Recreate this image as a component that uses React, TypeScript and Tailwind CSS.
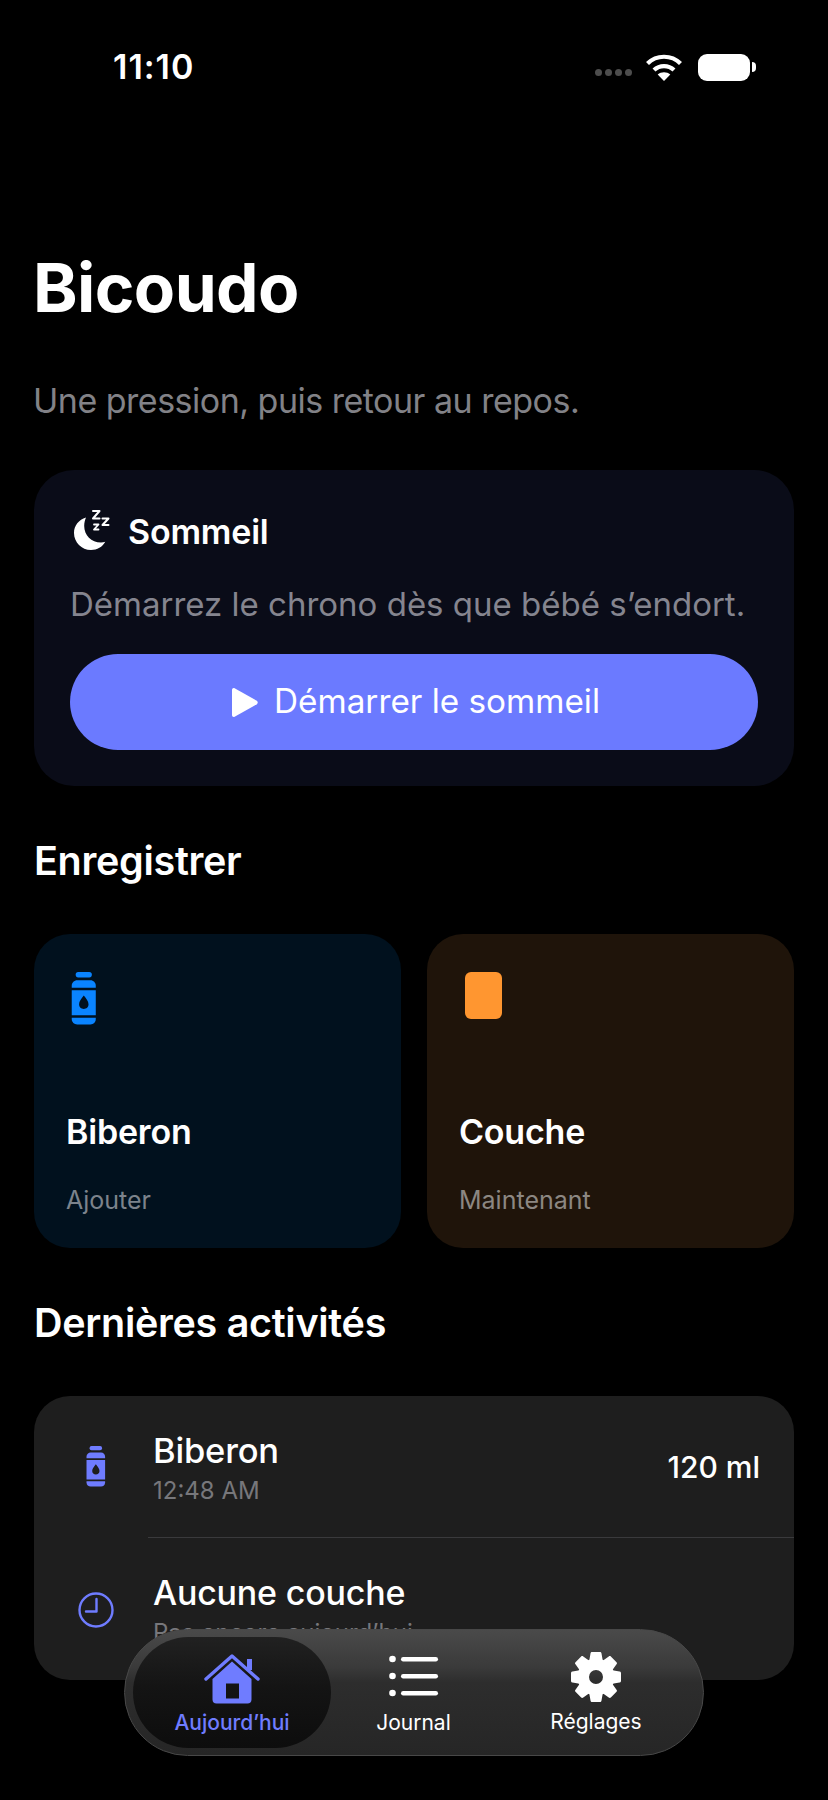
const font = { fontFamily: 'Inter, "Noto Sans", sans-serif' }

function BottleIcon({ className }: { className: string }) {
  return (
    <svg viewBox="0 0 26 54" className={className} fill="currentColor">
      <rect x="4.500" y="0" width="16.500" height="5.500" rx="2.600" />
      <path d="M6 8.500h13.600c3 0 5.400 2.400 5.400 5.600V16H0.500v-1.900C0.500 10.900 3 8.500 6 8.500Z" />
      <path
        fillRule="evenodd"
        d="M0.500 18.500H25V44H0.500V18.500ZM12.800 24c-2.500 3.300-4.800 5.900-4.800 8.900 0 2.800 2.100 4.800 4.800 4.800s4.800-2 4.800-4.800c0-3-2.300-5.600-4.800-8.900Z"
      />
      <path d="M0.500 46.500H25V48c0 3.200-2.400 5.500-5.400 5.500H6c-3 0-5.500-2.300-5.500-5.500V46.500Z" />
    </svg>
  )
}

function SleepIcon() {
  return (
    <svg viewBox="0 0 38 42" className="w-[38px] h-[42px] text-white" fill="none">
      <path
        d="M13 8.500C5.800 10.600 1 16.800 1 24c0 9.400 7.600 17 17 17 6.200 0 11.400-3 14.300-8.200-1.300.4-2.800.6-4.300.6-9.700 0-16.800-7.500-16.800-16.500 0-3.400.9-6.400 1.800-8.400Z"
        fill="currentColor"
      />
      <path d="M20 2h6.500L20 9.500h6.500" stroke="currentColor" strokeWidth="2" strokeLinejoin="round" strokeLinecap="round" />
      <path d="M29.500 9.500h6L29.500 16h6" stroke="currentColor" strokeWidth="2" strokeLinejoin="round" strokeLinecap="round" />
      <path d="M21 15.500h4.500L21 20.500h4.500" stroke="currentColor" strokeWidth="1.800" strokeLinejoin="round" strokeLinecap="round" />
    </svg>
  )
}

function HouseIcon() {
  return (
    <svg viewBox="0 0 56 50" className="w-[56px] h-[50px] text-[#6f7cff]" fill="none">
      <path d="M43 5h5v11h-5z" fill="currentColor" />
      <path d="M2 25 28 2l26 23" stroke="currentColor" strokeWidth="3.400" strokeLinecap="round" strokeLinejoin="round" />
      <path
        fillRule="evenodd"
        d="M28 7.500 47.500 25v20.500c0 2.500-1.500 4-4 4h-31c-2.500 0-4-1.500-4-4V25L28 7.500ZM22 29.500V44.500h13V29.500H22Z"
        fill="currentColor"
      />
    </svg>
  )
}

function ListIcon() {
  return (
    <svg viewBox="0 0 50 42" className="w-[50px] h-[42px] text-white" fill="currentColor">
      <circle cx="3.500" cy="4" r="3.300" />
      <circle cx="3.500" cy="21" r="3.300" />
      <circle cx="3.500" cy="38" r="3.300" />
      <rect x="12" y="2" width="37" height="4.400" rx="2.200" />
      <rect x="12" y="19" width="37" height="4.400" rx="2.200" />
      <rect x="12" y="36" width="37" height="4.400" rx="2.200" />
    </svg>
  )
}

function GearIcon() {
  const teeth = [0, 45, 90, 135, 180, 225, 270, 315]
  return (
    <svg viewBox="0 0 50 50" className="w-[50px] h-[50px] text-white" fill="currentColor">
      {teeth.map((a) => (
        <path key={a} d="M19.500 1.500c0-.8.600-1.500 1.500-1.500h8c.9 0 1.500.7 1.500 1.500L32 10H18Z" transform={`rotate(${a} 25 25)`} />
      ))}
      <path
        fillRule="evenodd"
        d="M25 6.500a18.500 18.500 0 1 0 0 37 18.500 18.500 0 0 0 0-37ZM25 18a7 7 0 1 1 0 14 7 7 0 0 1 0-14Z"
      />
    </svg>
  )
}

function WifiIcon() {
  return (
    <svg viewBox="0 0 38 28" className="w-[38px] h-[28px] text-white" fill="none" stroke="currentColor" strokeLinecap="butt">
      <path d="M2.500 10.500C11.500 1.500 26.500 1.500 35.500 10.500" strokeWidth="4.200" />
      <path d="M9 17c5.500-5.300 14.500-5.300 20 0" strokeWidth="4.200" />
      <path d="M19 28l-6.300-6.400c3.500-3 9.100-3 12.600 0Z" fill="currentColor" stroke="none" />
    </svg>
  )
}

function ClockIcon() {
  return (
    <svg viewBox="0 0 36 36" className="w-[36px] h-[36px] text-[#6f7cff]" fill="none" stroke="currentColor" strokeWidth="2.400">
      <circle cx="18" cy="18" r="16.500" />
      <path d="M18.500 7v12.500H8" strokeLinecap="round" strokeLinejoin="round" />
    </svg>
  )
}

export default function App() {
  return (
    <div style={font} className="relative w-[828px] h-[1800px] overflow-hidden bg-black text-white antialiased">
      {/* Status bar */}
      <div className="flex items-center justify-between h-[40px] mt-[47px] pl-[113px] pr-[72px]">
        <span className="text-[34px] leading-[40px] font-semibold tracking-[1px]">11:10</span>
        <div className="flex items-center">
          <div className="flex gap-[3px] mr-[13px] mt-[10px]">
            <span className="w-[7px] h-[7px] rounded-full bg-[#4d4d4d]" />
            <span className="w-[7px] h-[7px] rounded-full bg-[#4d4d4d]" />
            <span className="w-[7px] h-[7px] rounded-full bg-[#4d4d4d]" />
            <span className="w-[7px] h-[7px] rounded-full bg-[#4d4d4d]" />
          </div>
          <WifiIcon />
          <div className="w-[52px] h-[27px] ml-[15px] rounded-[9px] bg-white" />
          <div className="w-[4px] h-[10px] ml-[2px] rounded-r-full bg-white" />
        </div>
      </div>

      <div className="px-[34px]">
        {/* Header */}
        <h1 className="mt-[165px] -ml-[1px] text-[67.500px] leading-[72px] font-bold tracking-[-0.6px]">Bicoudo</h1>
        <p className="mt-[56px] -ml-[1px] text-[34px] leading-[42px] tracking-[-0.5px] text-[#828287]">Une pression, puis retour au repos.</p>

        {/* Sleep card */}
        <section className="mt-[48px] h-[316px] rounded-[40px] bg-[#0a0c18] pt-[38px] px-[36px]">
          <div className="flex items-center h-[44px] gap-[17px] pl-[3px]">
            <SleepIcon />
            <h2 className="mt-[3px] text-[34px] leading-[44px] font-semibold tracking-[-0.2px]">Sommeil</h2>
          </div>
          <p className="mt-[31px] text-[33px] leading-[42px] text-[#85858f] whitespace-nowrap">Démarrez le chrono dès que bébé s’endort.</p>
          <button className="mt-[29px] flex items-center justify-center gap-[16px] pl-[4px] w-full h-[96px] rounded-[48px] bg-[#6b7aff] text-[33.300px] font-normal">
            <svg viewBox="0 0 26 29" className="w-[26px] h-[29px]" fill="currentColor">
              <path d="M0 2C0 .5 1.300-.4 2.600.3l22.200 12.400c1.200.7 1.200 2.900 0 3.600L2.600 28.700C1.300 29.400 0 28.500 0 27Z" />
            </svg>
            Démarrer le sommeil
          </button>
        </section>

        {/* Quick log */}
        <h2 className="mt-[52px] text-[39.500px] leading-[46px] font-semibold tracking-[-0.3px]">Enregistrer</h2>
        <div className="mt-[50px] grid grid-cols-2 gap-[26px]">
          <div className="h-[314px] rounded-[36px] bg-[#01111e] pt-[38px] pl-[33px]">
            <BottleIcon className="ml-[4px] w-[26px] h-[53px] text-[#0a84ff]" />
            <div className="mt-[85px] -ml-[1px] text-[34px] leading-[44px] font-semibold tracking-[-0.2px]">Biberon</div>
            <div className="mt-[30px] -ml-[1px] text-[25px] leading-[32px] text-[#7c838c]">Ajouter</div>
          </div>
          <div className="h-[314px] rounded-[36px] bg-[#1f140a] pt-[38px] pl-[33px]">
            <div className="ml-[5px] w-[37px] h-[47px] rounded-[6px] bg-[#ff9630]" />
            <div className="mt-[91px] -ml-[1px] text-[34px] leading-[44px] font-semibold tracking-[-0.2px]">Couche</div>
            <div className="mt-[30px] -ml-[1px] text-[25px] leading-[32px] text-[#8c8782]">Maintenant</div>
          </div>
        </div>

        {/* Recent activity */}
        <h2 className="mt-[52px] text-[39.500px] leading-[46px] font-semibold tracking-[-0.3px]">Dernières activités</h2>
        <div className="mt-[50px] h-[284px] rounded-[36px] bg-[#1e1e1e] overflow-hidden">
          <div className="flex h-[141px] items-center pr-[34px]">
            <div className="w-[124px] flex justify-center shrink-0">
              <BottleIcon className="w-[20px] h-[41px] text-[#6f7cff]" />
            </div>
            <div className="flex-1 mt-[3px] -ml-[5px]">
              <div className="text-[34.500px] leading-[40px] font-medium tracking-[-0.2px]">Biberon</div>
              <div className="mt-[5px] text-[24px] leading-[30px] text-[#77777b]">12:48 AM</div>
            </div>
            <span className="mt-[2px] text-[30px] font-medium">120 ml</span>
          </div>
          <div className="ml-[114px] h-[1px] bg-[#3a3a3c]" />
          <div className="flex items-start pt-[35px]">
            <div className="w-[124px] flex justify-center shrink-0 pt-[19px]">
              <ClockIcon />
            </div>
            <div className="-ml-[5px]">
              <div className="text-[34px] leading-[40px] font-medium tracking-[-0.2px] whitespace-nowrap">Aucune couche</div>
              <div className="mt-[5px] text-[24px] leading-[30px] text-[#77777b]">Pas encore aujourd’hui</div>
            </div>
          </div>
        </div>
      </div>

      {/* Floating tab bar */}
      <nav className="absolute left-[124px] top-[1629px] w-[580px] h-[127px] rounded-[64px] border border-[#484848] bg-[linear-gradient(180deg,#4a4a4a_0%,#3a3a3a_30%,#2d2d2d_42%,#262626_100%)] flex items-center pl-[8px] pr-[8px]">
        <div className="w-[198px] h-[111px] shrink-0 rounded-[56px] bg-[linear-gradient(180deg,#212121_0%,#141414_45%,#0d0d0d_100%)] flex flex-col items-center pt-[17px]">
          <HouseIcon />
          <span className="mt-[6px] text-[21px] leading-[26px] font-medium text-[#6f7cff]">Aujourd’hui</span>
        </div>
        <div className="w-[165px] shrink-0 flex flex-col items-center pt-[5px]">
          <ListIcon />
          <span className="mt-[13px] text-[21px] leading-[26px] font-normal">Journal</span>
        </div>
        <div className="w-[200px] shrink-0 flex flex-col items-center pt-[2px]">
          <GearIcon />
          <span className="mt-[7px] text-[21px] leading-[26px] font-normal">Réglages</span>
        </div>
      </nav>
    </div>
  )
}
